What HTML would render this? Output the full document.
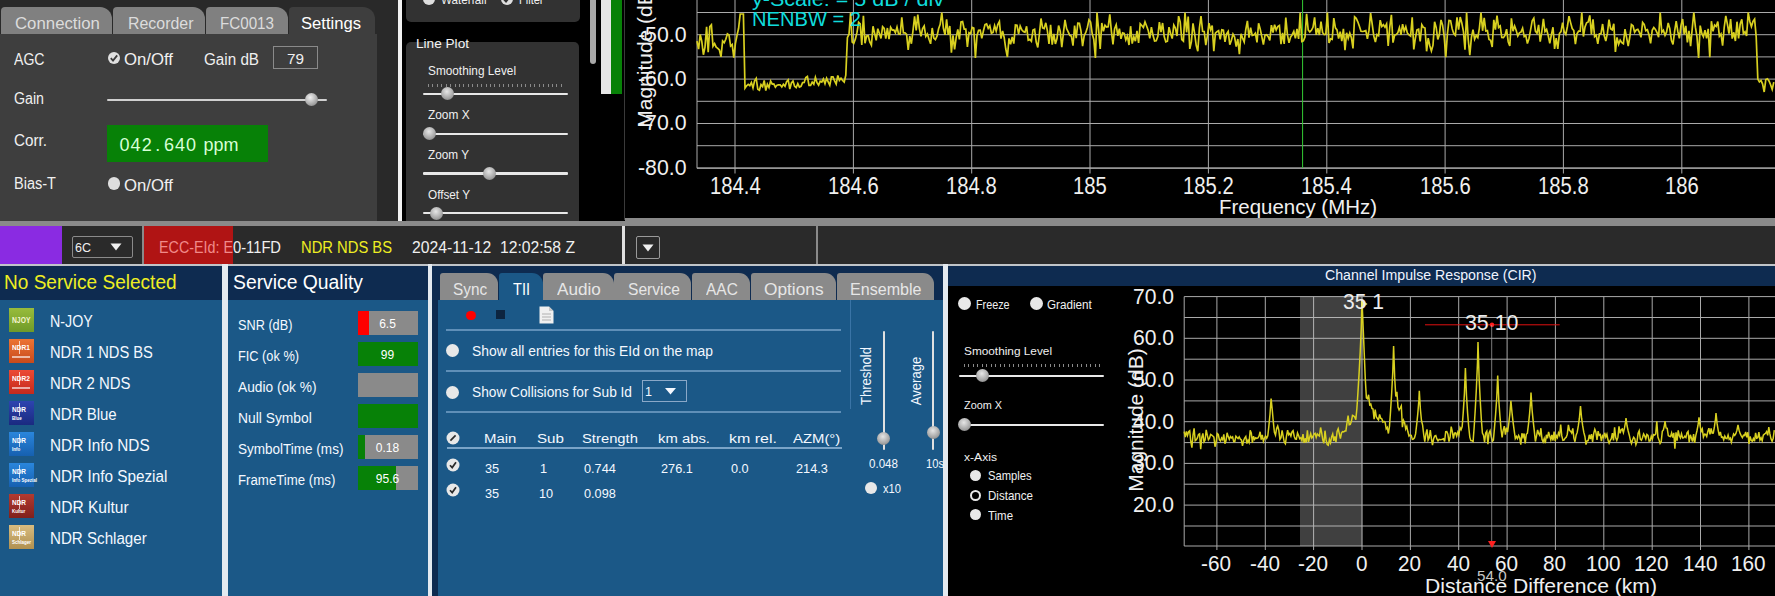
<!DOCTYPE html>
<html><head><meta charset="utf-8"><style>
html,body{margin:0;padding:0;}
body{width:1775px;height:596px;overflow:hidden;position:relative;background:#000;font-family:"Liberation Sans",sans-serif;}
body>div,body>span,body>svg{position:absolute;}
span{white-space:nowrap;}
</style></head><body>
<div style="left:0px;top:0px;width:397.5px;height:221px;background:#292929;"></div>
<div style="left:0px;top:34px;width:376.5px;height:187px;background:#3e3e3e;"></div>
<div style="left:1px;top:7px;width:111px;height:27px;background:#808080;border-radius:4px 12px 0 0;"></div>
<span style="left:14.80px;top:15.86px;font-size:16.7px;line-height:16.7px;color:#dcdcdc;transform:scaleX(1.0061);transform-origin:0 0;">Connection</span>
<div style="left:113px;top:7px;width:92px;height:27px;background:#808080;border-radius:4px 12px 0 0;"></div>
<span style="left:127.50px;top:15.86px;font-size:16.7px;line-height:16.7px;color:#dcdcdc;transform:scaleX(0.9537);transform-origin:0 0;">Recorder</span>
<div style="left:206px;top:7px;width:82px;height:27px;background:#808080;border-radius:4px 12px 0 0;"></div>
<span style="left:220.00px;top:15.86px;font-size:16.7px;line-height:16.7px;color:#dcdcdc;transform:scaleX(0.9089);transform-origin:0 0;">FC0013</span>
<div style="left:289px;top:7px;width:86px;height:27px;background:#3e3e3e;border-radius:4px 12px 0 0;"></div>
<span style="left:301.00px;top:15.86px;font-size:16.7px;line-height:16.7px;color:#ffffff;transform:scaleX(0.9944);transform-origin:0 0;">Settings</span>
<span style="left:14.00px;top:52.46px;font-size:16px;line-height:16px;color:#f0f0f0;transform:scaleX(0.8797);transform-origin:0 0;">AGC</span>
<span style="left:14.00px;top:91.26px;font-size:16px;line-height:16px;color:#f0f0f0;transform:scaleX(0.8877);transform-origin:0 0;">Gain</span>
<span style="left:14.00px;top:133.46px;font-size:16px;line-height:16px;color:#f0f0f0;transform:scaleX(0.9518);transform-origin:0 0;">Corr.</span>
<span style="left:14.00px;top:176.46px;font-size:16px;line-height:16px;color:#f0f0f0;transform:scaleX(0.9086);transform-origin:0 0;">Bias-T</span>
<svg style="left:107px;top:51px" width="14" height="14" viewBox="0 0 14 14"><circle cx="7" cy="7" r="6" fill="#e0e0e0"/><path d="M3.8 7.2 L6 9.6 L10.2 4.4" stroke="#3c3c3c" stroke-width="1.8" fill="none"/></svg>
<span style="left:124.40px;top:51.96px;font-size:16px;line-height:16px;color:#f0f0f0;transform:scaleX(1.0462);transform-origin:0 0;">On/Off</span>
<span style="left:203.70px;top:51.96px;font-size:16px;line-height:16px;color:#f0f0f0;transform:scaleX(0.9514);transform-origin:0 0;">Gain dB</span>
<div style="left:273px;top:46px;width:45px;height:23px;background:transparent;border:1px solid #8a8a8a;box-sizing:border-box;"></div>
<span style="left:287.00px;top:51.30px;font-size:15px;line-height:15px;color:#f0f0f0;transform:scaleX(1.0189);transform-origin:0 0;">79</span>
<div style="left:107px;top:98.5px;width:220px;height:2.5px;background:#d0d0d0;border-radius:1px;"></div>
<div style="left:305px;top:93px;width:13px;height:13px;border-radius:50%;background:radial-gradient(circle at 40% 35%,#f0f0f0,#9a9a9a 70%,#707070);"></div>
<div style="left:107px;top:125px;width:161px;height:37px;background:#078107;"></div>
<span style="left:119.49px;top:136.26px;font-size:18px;line-height:18px;color:#d8ffd8;">0</span>
<span style="left:130.59px;top:136.26px;font-size:18px;line-height:18px;color:#d8ffd8;">4</span>
<span style="left:141.69px;top:136.26px;font-size:18px;line-height:18px;color:#d8ffd8;">2</span>
<span style="left:155.30px;top:136.26px;font-size:18px;line-height:18px;color:#d8ffd8;">.</span>
<span style="left:163.89px;top:136.26px;font-size:18px;line-height:18px;color:#d8ffd8;">6</span>
<span style="left:174.99px;top:136.26px;font-size:18px;line-height:18px;color:#d8ffd8;">4</span>
<span style="left:186.09px;top:136.26px;font-size:18px;line-height:18px;color:#d8ffd8;">0</span>
<span style="left:203.60px;top:136.26px;font-size:18px;line-height:18px;color:#d8ffd8;">ppm</span>
<div style="left:107.5px;top:177px;width:12.5px;height:12.5px;border-radius:50%;background:#dedede;"></div>
<span style="left:124.40px;top:177.66px;font-size:16px;line-height:16px;color:#f0f0f0;transform:scaleX(1.0462);transform-origin:0 0;">On/Off</span>
<div style="left:397.5px;top:0px;width:4px;height:221px;background:#f2f2f2;"></div>
<div style="left:401.5px;top:0px;width:223.5px;height:221px;background:#000;"></div>
<div style="left:406px;top:-10px;width:173.5px;height:32.3px;background:#323232;border-radius:5px;"></div>
<div style="left:422.8px;top:-7.5px;width:12px;height:12px;border-radius:50%;background:#dedede;"></div>
<span style="left:440.50px;top:-6.80px;font-size:13px;line-height:13px;color:#f0f0f0;transform:scaleX(0.8956);transform-origin:0 0;">Waterfall</span>
<svg style="left:500.4px;top:-8.5px" width="14" height="14" viewBox="0 0 14 14"><circle cx="7" cy="7" r="6" fill="#dedede"/><path d="M3.8 7.2 L6 9.6 L10.2 4.4" stroke="#323232" stroke-width="1.8" fill="none"/></svg>
<span style="left:518.50px;top:-6.80px;font-size:13px;line-height:13px;color:#f0f0f0;transform:scaleX(0.8481);transform-origin:0 0;">Filter</span>
<div style="left:406px;top:42px;width:173px;height:190px;background:#323232;border-radius:5px;"></div>
<span style="left:415.70px;top:37.30px;font-size:13px;line-height:13px;color:#f4f4f4;transform:scaleX(1.0477);transform-origin:0 0;">Line Plot</span>
<span style="left:427.50px;top:64.62px;font-size:12.5px;line-height:12.5px;color:#f0f0f0;transform:scaleX(0.9451);transform-origin:0 0;">Smoothing Level</span>
<div style="left:428.00px;top:84px;width:1px;height:3px;background:#8a8a8a;"></div><div style="left:432.43px;top:84px;width:1px;height:3px;background:#8a8a8a;"></div><div style="left:436.86px;top:84px;width:1px;height:3px;background:#8a8a8a;"></div><div style="left:441.29px;top:84px;width:1px;height:3px;background:#8a8a8a;"></div><div style="left:445.72px;top:84px;width:1px;height:3px;background:#8a8a8a;"></div><div style="left:450.15px;top:84px;width:1px;height:3px;background:#8a8a8a;"></div><div style="left:454.58px;top:84px;width:1px;height:3px;background:#8a8a8a;"></div><div style="left:459.01px;top:84px;width:1px;height:3px;background:#8a8a8a;"></div><div style="left:463.44px;top:84px;width:1px;height:3px;background:#8a8a8a;"></div><div style="left:467.87px;top:84px;width:1px;height:3px;background:#8a8a8a;"></div><div style="left:472.30px;top:84px;width:1px;height:3px;background:#8a8a8a;"></div><div style="left:476.73px;top:84px;width:1px;height:3px;background:#8a8a8a;"></div><div style="left:481.16px;top:84px;width:1px;height:3px;background:#8a8a8a;"></div><div style="left:485.59px;top:84px;width:1px;height:3px;background:#8a8a8a;"></div><div style="left:490.02px;top:84px;width:1px;height:3px;background:#8a8a8a;"></div><div style="left:494.45px;top:84px;width:1px;height:3px;background:#8a8a8a;"></div><div style="left:498.88px;top:84px;width:1px;height:3px;background:#8a8a8a;"></div><div style="left:503.31px;top:84px;width:1px;height:3px;background:#8a8a8a;"></div><div style="left:507.74px;top:84px;width:1px;height:3px;background:#8a8a8a;"></div><div style="left:512.17px;top:84px;width:1px;height:3px;background:#8a8a8a;"></div><div style="left:516.60px;top:84px;width:1px;height:3px;background:#8a8a8a;"></div><div style="left:521.03px;top:84px;width:1px;height:3px;background:#8a8a8a;"></div><div style="left:525.46px;top:84px;width:1px;height:3px;background:#8a8a8a;"></div><div style="left:529.89px;top:84px;width:1px;height:3px;background:#8a8a8a;"></div><div style="left:534.32px;top:84px;width:1px;height:3px;background:#8a8a8a;"></div><div style="left:538.75px;top:84px;width:1px;height:3px;background:#8a8a8a;"></div><div style="left:543.18px;top:84px;width:1px;height:3px;background:#8a8a8a;"></div><div style="left:547.61px;top:84px;width:1px;height:3px;background:#8a8a8a;"></div><div style="left:552.04px;top:84px;width:1px;height:3px;background:#8a8a8a;"></div><div style="left:556.47px;top:84px;width:1px;height:3px;background:#8a8a8a;"></div><div style="left:560.90px;top:84px;width:1px;height:3px;background:#8a8a8a;"></div>
<div style="left:422.5px;top:92.8px;width:145px;height:2.2px;background:#e8e8e8;border-radius:1px;"></div>
<div style="left:440.5px;top:87px;width:13px;height:13px;border-radius:50%;background:radial-gradient(circle at 45% 35%,#e6e6e6,#a0a0a0 65%,#6a6a6a);"></div>
<span style="left:427.50px;top:109.42px;font-size:12.5px;line-height:12.5px;color:#f0f0f0;transform:scaleX(0.9506);transform-origin:0 0;">Zoom X</span>
<div style="left:422.5px;top:132.5px;width:145px;height:2.2px;background:#e8e8e8;border-radius:1px;"></div>
<div style="left:422.5px;top:127.1px;width:13px;height:13px;border-radius:50%;background:radial-gradient(circle at 45% 35%,#e6e6e6,#a0a0a0 65%,#6a6a6a);"></div>
<span style="left:427.50px;top:149.42px;font-size:12.5px;line-height:12.5px;color:#f0f0f0;transform:scaleX(0.9418);transform-origin:0 0;">Zoom Y</span>
<div style="left:422.5px;top:172.4px;width:145px;height:2.2px;background:#e8e8e8;border-radius:1px;"></div>
<div style="left:482.5px;top:167.0px;width:13px;height:13px;border-radius:50%;background:radial-gradient(circle at 45% 35%,#e6e6e6,#a0a0a0 65%,#6a6a6a);"></div>
<span style="left:427.50px;top:189.42px;font-size:12.5px;line-height:12.5px;color:#f0f0f0;transform:scaleX(0.9395);transform-origin:0 0;">Offset Y</span>
<div style="left:422.5px;top:212.3px;width:145px;height:2.2px;background:#e8e8e8;border-radius:1px;"></div>
<div style="left:429.5px;top:206.9px;width:13px;height:13px;border-radius:50%;background:radial-gradient(circle at 45% 35%,#e6e6e6,#a0a0a0 65%,#6a6a6a);"></div>
<div style="left:590px;top:-5px;width:6px;height:68.5px;background:#a8a8a8;border-radius:3px;"></div>
<div style="left:601px;top:0px;width:10px;height:94px;background:#e6e6e6;"></div>
<div style="left:611px;top:0px;width:11px;height:94px;background:#078107;"></div>
<div style="left:623.5px;top:0px;width:1.5px;height:220px;background:#3a3a3a;"></div>
<svg style="left:0;top:0" width="1775" height="220"><g stroke="#c8c8c8" stroke-width="1" opacity="0.85"><line x1="697" y1="12.5" x2="1775" y2="12.5"/><line x1="697" y1="34.7" x2="1775" y2="34.7"/><line x1="697" y1="56.9" x2="1775" y2="56.9"/><line x1="697" y1="79.1" x2="1775" y2="79.1"/><line x1="697" y1="101.3" x2="1775" y2="101.3"/><line x1="697" y1="123.5" x2="1775" y2="123.5"/><line x1="697" y1="145.7" x2="1775" y2="145.7"/><line x1="697" y1="167.9" x2="1775" y2="167.9"/><line x1="735.0" y1="0" x2="735.0" y2="173.5"/><line x1="853.4" y1="0" x2="853.4" y2="173.5"/><line x1="971.7" y1="0" x2="971.7" y2="173.5"/><line x1="1090.0" y1="0" x2="1090.0" y2="173.5"/><line x1="1208.4" y1="0" x2="1208.4" y2="173.5"/><line x1="1326.8" y1="0" x2="1326.8" y2="173.5"/><line x1="1445.1" y1="0" x2="1445.1" y2="173.5"/><line x1="1563.4" y1="0" x2="1563.4" y2="173.5"/><line x1="1681.8" y1="0" x2="1681.8" y2="173.5"/><line x1="1800.1" y1="0" x2="1800.1" y2="173.5"/><line x1="697" y1="0" x2="697" y2="168.3"/><line x1="697" y1="168.3" x2="1775" y2="168.3"/></g><line x1="1302.6" y1="0" x2="1302.6" y2="168" stroke="#33cc33" stroke-width="1"/><polyline points="697.0,41.1 698.6,49.2 700.2,34.5 701.8,41.3 703.4,54.7 705.0,47.1 706.6,26.7 708.2,52.1 709.8,26.7 711.4,24.9 713.0,46.2 714.6,43.6 716.2,47.2 717.8,48.3 719.4,50.0 721.0,56.8 722.6,41.0 724.2,42.7 725.8,39.3 727.4,33.8 729.0,35.0 730.6,46.1 732.2,44.6 733.8,57.7 735.4,43.6 737.0,35.4 738.6,28.3 740.2,14.0 741.8,14.0 743.4,14.0 745.0,88.1 746.6,85.8 748.2,84.4 749.8,85.7 751.4,82.6 753.0,87.9 754.6,80.9 756.2,78.4 757.8,89.3 759.4,90.2 761.0,84.6 762.6,86.6 764.2,80.5 765.8,90.5 767.4,84.2 769.0,87.5 770.6,81.1 772.2,84.0 773.8,83.8 775.4,87.1 777.0,85.2 778.6,84.9 780.2,84.8 781.8,86.9 783.4,84.3 785.0,86.3 786.6,81.7 788.2,79.9 789.8,89.0 791.4,83.0 793.0,81.1 794.6,86.2 796.2,87.6 797.8,83.6 799.4,87.1 801.0,86.3 802.6,82.6 804.2,82.4 805.8,77.6 807.4,76.5 809.0,85.4 810.6,85.4 812.2,82.1 813.8,84.2 815.4,77.4 817.0,82.7 818.6,85.1 820.2,81.2 821.8,82.0 823.4,78.9 825.0,83.7 826.6,78.3 828.2,81.9 829.8,85.3 831.4,76.9 833.0,76.9 834.6,80.9 836.2,84.1 837.8,75.4 839.4,80.4 841.0,78.2 842.6,80.5 844.2,82.0 845.8,75.1 847.4,37.6 849.0,34.2 850.6,12.5 852.2,42.0 853.8,43.3 855.4,38.9 857.0,32.4 858.6,22.3 860.2,23.9 861.8,44.9 863.4,15.8 865.0,43.2 866.6,36.0 868.2,35.7 869.8,41.9 871.4,45.2 873.0,26.3 874.6,33.2 876.2,40.4 877.8,28.7 879.4,33.4 881.0,38.4 882.6,26.6 884.2,28.3 885.8,38.6 887.4,28.0 889.0,39.2 890.6,27.3 892.2,30.0 893.8,29.8 895.4,32.7 897.0,27.2 898.6,34.0 900.2,34.2 901.8,17.4 903.4,32.9 905.0,32.9 906.6,34.4 908.2,50.0 909.8,36.1 911.4,43.7 913.0,30.6 914.6,16.4 916.2,30.4 917.8,14.6 919.4,28.6 921.0,36.3 922.6,28.6 924.2,26.0 925.8,36.4 927.4,33.9 929.0,39.2 930.6,43.8 932.2,28.0 933.8,38.0 935.4,39.6 937.0,36.2 938.6,28.8 940.2,24.4 941.8,12.5 943.4,28.3 945.0,34.8 946.6,19.3 948.2,34.8 949.8,26.0 951.4,52.6 953.0,35.4 954.6,49.5 956.2,37.4 957.8,29.3 959.4,39.4 961.0,22.0 962.6,21.5 964.2,29.1 965.8,29.1 967.4,46.9 969.0,32.6 970.6,33.6 972.2,27.4 973.8,28.0 975.4,58.0 977.0,35.4 978.6,30.3 980.2,30.2 981.8,38.4 983.4,31.0 985.0,24.7 986.6,24.0 988.2,28.4 989.8,25.8 991.4,33.3 993.0,32.4 994.6,25.6 996.2,31.1 997.8,24.6 999.4,21.5 1001.0,38.7 1002.6,31.0 1004.2,37.6 1005.8,49.0 1007.4,57.0 1009.0,38.4 1010.6,44.2 1012.2,36.9 1013.8,43.6 1015.4,25.0 1017.0,25.3 1018.6,33.9 1020.2,26.0 1021.8,29.8 1023.4,31.6 1025.0,32.3 1026.6,26.3 1028.2,40.2 1029.8,39.4 1031.4,41.3 1033.0,30.0 1034.6,29.3 1036.2,42.0 1037.8,47.5 1039.4,34.0 1041.0,18.5 1042.6,27.8 1044.2,28.5 1045.8,22.8 1047.4,30.8 1049.0,44.0 1050.6,24.9 1052.2,44.6 1053.8,33.9 1055.4,43.9 1057.0,38.6 1058.6,25.6 1060.2,31.2 1061.8,47.2 1063.4,33.1 1065.0,19.8 1066.6,28.6 1068.2,31.8 1069.8,35.4 1071.4,36.1 1073.0,45.7 1074.6,25.5 1076.2,38.2 1077.8,23.2 1079.4,23.3 1081.0,31.2 1082.6,46.1 1084.2,35.7 1085.8,32.4 1087.4,27.5 1089.0,19.8 1090.6,22.0 1092.2,33.6 1093.8,39.5 1095.4,58.0 1097.0,12.5 1098.6,29.5 1100.2,49.0 1101.8,23.0 1103.4,31.4 1105.0,25.3 1106.6,27.0 1108.2,26.7 1109.8,14.3 1111.4,31.3 1113.0,44.3 1114.6,28.6 1116.2,24.7 1117.8,35.8 1119.4,28.7 1121.0,38.8 1122.6,32.8 1124.2,33.3 1125.8,39.9 1127.4,35.8 1129.0,45.0 1130.6,26.2 1132.2,43.6 1133.8,36.6 1135.4,41.2 1137.0,30.8 1138.6,43.0 1140.2,23.7 1141.8,25.5 1143.4,27.5 1145.0,21.9 1146.6,26.0 1148.2,30.4 1149.8,38.4 1151.4,27.1 1153.0,35.3 1154.6,41.1 1156.2,40.8 1157.8,36.5 1159.4,22.2 1161.0,32.0 1162.6,23.0 1164.2,36.5 1165.8,41.9 1167.4,41.2 1169.0,27.1 1170.6,33.4 1172.2,38.6 1173.8,25.1 1175.4,28.0 1177.0,36.0 1178.6,16.1 1180.2,22.0 1181.8,39.7 1183.4,41.2 1185.0,12.5 1186.6,32.3 1188.2,16.6 1189.8,48.9 1191.4,41.6 1193.0,23.3 1194.6,33.4 1196.2,45.3 1197.8,51.3 1199.4,28.0 1201.0,16.0 1202.6,31.3 1204.2,31.5 1205.8,45.1 1207.4,35.8 1209.0,23.2 1210.6,29.9 1212.2,25.5 1213.8,51.2 1215.4,33.1 1217.0,31.7 1218.6,30.6 1220.2,39.3 1221.8,29.8 1223.4,30.1 1225.0,41.9 1226.6,33.9 1228.2,31.5 1229.8,44.6 1231.4,40.2 1233.0,34.1 1234.6,37.0 1236.2,46.7 1237.8,39.0 1239.4,54.1 1241.0,33.8 1242.6,38.1 1244.2,41.9 1245.8,29.5 1247.4,20.9 1249.0,37.7 1250.6,27.6 1252.2,35.5 1253.8,35.0 1255.4,33.1 1257.0,42.4 1258.6,23.2 1260.2,28.9 1261.8,36.7 1263.4,44.6 1265.0,35.1 1266.6,34.7 1268.2,36.7 1269.8,40.5 1271.4,25.2 1273.0,32.5 1274.6,24.7 1276.2,30.1 1277.8,26.5 1279.4,25.5 1281.0,44.2 1282.6,32.8 1284.2,44.0 1285.8,17.6 1287.4,34.7 1289.0,42.9 1290.6,37.0 1292.2,34.7 1293.8,31.4 1295.4,38.4 1297.0,29.0 1298.6,38.9 1300.2,12.9 1301.8,41.6 1303.4,40.9 1305.0,37.1 1306.6,13.9 1308.2,30.0 1309.8,31.9 1311.4,30.3 1313.0,27.3 1314.6,17.3 1316.2,34.9 1317.8,28.2 1319.4,35.0 1321.0,21.5 1322.6,32.7 1324.2,34.6 1325.8,34.2 1327.4,12.5 1329.0,43.0 1330.6,38.9 1332.2,39.4 1333.8,18.1 1335.4,27.8 1337.0,29.9 1338.6,38.6 1340.2,31.7 1341.8,41.2 1343.4,28.8 1345.0,50.1 1346.6,32.8 1348.2,38.5 1349.8,33.0 1351.4,37.7 1353.0,48.4 1354.6,16.8 1356.2,18.3 1357.8,21.8 1359.4,26.2 1361.0,31.3 1362.6,31.5 1364.2,31.1 1365.8,30.6 1367.4,38.8 1369.0,30.2 1370.6,13.1 1372.2,24.1 1373.8,36.1 1375.4,42.0 1377.0,34.5 1378.6,35.7 1380.2,20.1 1381.8,26.5 1383.4,24.7 1385.0,27.2 1386.6,24.0 1388.2,46.0 1389.8,26.8 1391.4,14.9 1393.0,42.6 1394.6,35.3 1396.2,34.6 1397.8,32.8 1399.4,27.6 1401.0,34.8 1402.6,24.1 1404.2,31.2 1405.8,26.7 1407.4,33.2 1409.0,34.9 1410.6,36.2 1412.2,17.3 1413.8,49.4 1415.4,38.0 1417.0,29.9 1418.6,29.2 1420.2,41.3 1421.8,24.7 1423.4,27.4 1425.0,28.0 1426.6,51.3 1428.2,38.2 1429.8,45.7 1431.4,51.0 1433.0,45.2 1434.6,21.7 1436.2,27.7 1437.8,39.4 1439.4,34.5 1441.0,19.9 1442.6,25.1 1444.2,36.9 1445.8,57.3 1447.4,33.8 1449.0,20.5 1450.6,20.7 1452.2,28.9 1453.8,33.7 1455.4,35.4 1457.0,17.4 1458.6,29.7 1460.2,17.1 1461.8,22.9 1463.4,31.3 1465.0,49.7 1466.6,12.5 1468.2,39.3 1469.8,55.1 1471.4,37.6 1473.0,29.7 1474.6,39.2 1476.2,35.5 1477.8,37.6 1479.4,28.1 1481.0,12.6 1482.6,30.8 1484.2,17.8 1485.8,31.0 1487.4,30.6 1489.0,39.4 1490.6,40.4 1492.2,47.0 1493.8,19.8 1495.4,29.6 1497.0,15.5 1498.6,27.4 1500.2,25.9 1501.8,37.5 1503.4,37.7 1505.0,35.3 1506.6,29.2 1508.2,41.7 1509.8,46.0 1511.4,18.4 1513.0,31.2 1514.6,25.9 1516.2,30.5 1517.8,35.9 1519.4,32.8 1521.0,32.1 1522.6,28.2 1524.2,36.6 1525.8,35.6 1527.4,43.6 1529.0,38.5 1530.6,29.8 1532.2,20.7 1533.8,18.2 1535.4,31.2 1537.0,33.3 1538.6,24.8 1540.2,41.6 1541.8,31.8 1543.4,18.9 1545.0,31.6 1546.6,29.5 1548.2,35.5 1549.8,43.3 1551.4,34.6 1553.0,27.2 1554.6,48.9 1556.2,38.2 1557.8,48.8 1559.4,33.5 1561.0,31.6 1562.6,22.6 1564.2,31.8 1565.8,34.4 1567.4,26.5 1569.0,16.2 1570.6,22.6 1572.2,28.5 1573.8,30.6 1575.4,44.1 1577.0,33.7 1578.6,31.1 1580.2,31.2 1581.8,12.5 1583.4,36.5 1585.0,27.0 1586.6,22.8 1588.2,21.9 1589.8,15.4 1591.4,34.3 1593.0,19.4 1594.6,36.6 1596.2,35.1 1597.8,43.8 1599.4,33.8 1601.0,33.7 1602.6,24.0 1604.2,35.5 1605.8,41.0 1607.4,33.3 1609.0,19.7 1610.6,28.7 1612.2,29.8 1613.8,23.7 1615.4,52.0 1617.0,37.4 1618.6,44.4 1620.2,40.1 1621.8,42.6 1623.4,43.7 1625.0,29.1 1626.6,37.6 1628.2,46.1 1629.8,37.0 1631.4,24.5 1633.0,25.8 1634.6,32.2 1636.2,29.9 1637.8,29.3 1639.4,32.4 1641.0,37.3 1642.6,22.4 1644.2,24.5 1645.8,30.6 1647.4,29.7 1649.0,35.0 1650.6,43.4 1652.2,30.2 1653.8,27.5 1655.4,29.4 1657.0,32.5 1658.6,37.1 1660.2,12.5 1661.8,32.3 1663.4,30.2 1665.0,35.3 1666.6,31.9 1668.2,23.0 1669.8,28.6 1671.4,40.4 1673.0,44.4 1674.6,31.3 1676.2,21.1 1677.8,31.4 1679.4,38.3 1681.0,25.4 1682.6,19.0 1684.2,34.3 1685.8,25.9 1687.4,42.3 1689.0,30.9 1690.6,46.2 1692.2,28.8 1693.8,12.5 1695.4,27.2 1697.0,36.9 1698.6,58.0 1700.2,25.6 1701.8,33.3 1703.4,36.7 1705.0,30.2 1706.6,38.4 1708.2,28.9 1709.8,57.3 1711.4,21.2 1713.0,31.4 1714.6,25.0 1716.2,26.4 1717.8,21.6 1719.4,36.2 1721.0,34.0 1722.6,45.7 1724.2,27.5 1725.8,15.9 1727.4,24.1 1729.0,33.7 1730.6,19.0 1732.2,38.6 1733.8,32.3 1735.4,41.0 1737.0,21.7 1738.6,38.4 1740.2,23.9 1741.8,19.4 1743.4,33.7 1745.0,31.7 1746.6,36.0 1748.2,12.5 1749.8,21.5 1751.4,26.7 1753.0,21.4 1754.6,19.1 1756.2,36.9 1757.8,79.1 1759.4,82.0 1761.0,80.5 1762.6,84.1 1764.2,92.0 1765.8,79.5 1767.4,78.8 1769.0,80.9 1770.6,84.7 1772.2,89.4 1773.8,82.1" fill="none" stroke="#d8d020" stroke-width="1.7"/></svg>
<span style="left:638.00px;top:23.65px;font-size:22.5px;line-height:22.5px;color:#f0f0f0;transform:scaleX(0.9457);transform-origin:0 0;">-50.0</span>
<span style="left:638.00px;top:68.05px;font-size:22.5px;line-height:22.5px;color:#f0f0f0;transform:scaleX(0.9457);transform-origin:0 0;">-60.0</span>
<span style="left:638.00px;top:112.45px;font-size:22.5px;line-height:22.5px;color:#f0f0f0;transform:scaleX(0.9457);transform-origin:0 0;">-70.0</span>
<span style="left:638.00px;top:156.85px;font-size:22.5px;line-height:22.5px;color:#f0f0f0;transform:scaleX(0.9457);transform-origin:0 0;">-80.0</span>
<span style="left:709.67px;top:174.73px;font-size:23px;line-height:23px;color:#f0f0f0;transform:scaleX(0.8800);transform-origin:0 0;">184.4</span>
<span style="left:828.02px;top:174.73px;font-size:23px;line-height:23px;color:#f0f0f0;transform:scaleX(0.8800);transform-origin:0 0;">184.6</span>
<span style="left:946.37px;top:174.73px;font-size:23px;line-height:23px;color:#f0f0f0;transform:scaleX(0.8800);transform-origin:0 0;">184.8</span>
<span style="left:1073.16px;top:174.73px;font-size:23px;line-height:23px;color:#f0f0f0;transform:scaleX(0.8800);transform-origin:0 0;">185</span>
<span style="left:1183.07px;top:174.73px;font-size:23px;line-height:23px;color:#f0f0f0;transform:scaleX(0.8800);transform-origin:0 0;">185.2</span>
<span style="left:1301.42px;top:174.73px;font-size:23px;line-height:23px;color:#f0f0f0;transform:scaleX(0.8800);transform-origin:0 0;">185.4</span>
<span style="left:1419.77px;top:174.73px;font-size:23px;line-height:23px;color:#f0f0f0;transform:scaleX(0.8800);transform-origin:0 0;">185.6</span>
<span style="left:1538.12px;top:174.73px;font-size:23px;line-height:23px;color:#f0f0f0;transform:scaleX(0.8800);transform-origin:0 0;">185.8</span>
<span style="left:1664.91px;top:174.73px;font-size:23px;line-height:23px;color:#f0f0f0;transform:scaleX(0.8800);transform-origin:0 0;">186</span>
<span style="left:1219.00px;top:196.22px;font-size:21px;line-height:21px;color:#f0f0f0;transform:scaleX(0.9741);transform-origin:0 0;">Frequency (MHz)</span>
<span style="left:644px;top:56px;font-size:21px;line-height:21px;color:#f0f0f0;transform:translate(-50%,-50%) rotate(-90deg);white-space:nowrap;">Magnitude (dB)</span>
<span style="left:751.80px;top:-10.53px;font-size:20px;line-height:20px;color:#10dcdc;transform:scaleX(1.0761);transform-origin:0 0;">y-Scale: = 5 dB / div</span>
<span style="left:751.80px;top:9.47px;font-size:20px;line-height:20px;color:#10dcdc;transform:scaleX(1.0059);transform-origin:0 0;">NENBW = 2</span>
<div style="left:0px;top:221px;width:625px;height:5px;background:#8a8a8a;"></div>
<div style="left:625px;top:218px;width:1150px;height:8px;background:#8a8a8a;"></div>
<div style="left:0px;top:226px;width:1775px;height:38px;background:#2a2a2a;"></div>
<div style="left:0px;top:226px;width:62px;height:38px;background:#8a2be2;"></div>
<div style="left:72px;top:236px;width:61px;height:22px;background:transparent;border:1px solid #8a8a8a;border-radius:2px;box-sizing:border-box;"></div>
<span style="left:75.00px;top:241.00px;font-size:13px;line-height:13px;color:#f0f0f0;transform:scaleX(0.9629);transform-origin:0 0;">6C</span>
<svg style="left:110px;top:243px" width="12" height="8"><path d="M0.5 0.5 L11.5 0.5 L6 7.5Z" fill="#f0f0f0"/></svg>
<div style="left:142px;top:226px;width:2px;height:38px;background:#8a8a8a;"></div>
<div style="left:144px;top:226px;width:89px;height:38px;background:#b01414;"></div>
<span style="left:159.00px;top:239.96px;font-size:16px;line-height:16px;color:#f08a8a;transform:scaleX(0.8949);transform-origin:0 0;">ECC-EId: E</span>
<span style="left:233.00px;top:239.96px;font-size:16px;line-height:16px;color:#f0f0f0;transform:scaleX(0.9202);transform-origin:0 0;">0-11FD</span>
<span style="left:301.00px;top:239.96px;font-size:16px;line-height:16px;color:#eeee22;transform:scaleX(0.9222);transform-origin:0 0;">NDR NDS BS</span>
<span style="left:412.00px;top:239.96px;font-size:16px;line-height:16px;color:#f0f0f0;transform:scaleX(0.9817);transform-origin:0 0;white-space:pre;">2024-11-12  12:02:58 Z</span>
<div style="left:622px;top:226px;width:3px;height:38px;background:#e0e0e0;"></div>
<div style="left:636px;top:236px;width:24px;height:23px;background:transparent;border:1px solid #9a9a9a;border-radius:2px;box-sizing:border-box;"></div>
<svg style="left:642px;top:244px" width="12" height="8"><path d="M0.5 0.5 L11.5 0.5 L6 7.5Z" fill="#f0f0f0"/></svg>
<div style="left:816px;top:226px;width:2px;height:38px;background:#8a8a8a;"></div>
<div style="left:0px;top:264px;width:1775px;height:2px;background:#c0c4c8;"></div>
<div style="left:0px;top:266px;width:222px;height:34px;background:#0e2b50;"></div>
<div style="left:0px;top:300px;width:222px;height:296px;background:#1b5887;"></div>
<div style="left:222px;top:264px;width:6px;height:332px;background:#e4eaf0;"></div>
<div style="left:228px;top:266px;width:200px;height:34px;background:#0e2b50;"></div>
<div style="left:228px;top:300px;width:200px;height:296px;background:#1b5887;"></div>
<div style="left:428px;top:264px;width:4px;height:332px;background:#e4eaf0;"></div>
<div style="left:432px;top:266px;width:511px;height:330px;background:#0e2b50;"></div>
<div style="left:437.5px;top:300px;width:505.5px;height:296px;background:#1b5887;"></div>
<div style="left:943px;top:264px;width:5px;height:332px;background:#e4eaf0;"></div>
<div style="left:948px;top:266px;width:827px;height:20px;background:#0e2b50;"></div>
<div style="left:948px;top:286px;width:827px;height:310px;background:#000;"></div>
<span style="left:3.60px;top:272.27px;font-size:20px;line-height:20px;color:#eeee22;transform:scaleX(0.9525);transform-origin:0 0;">No Service Selected</span>
<span style="left:233.00px;top:272.27px;font-size:20px;line-height:20px;color:#ffffff;transform:scaleX(0.9666);transform-origin:0 0;">Service Quality</span>
<div style="left:9.2px;top:307.5px;width:24.4px;height:24.4px;background:linear-gradient(#98bc3c,#6f9a28);"></div>
<span style="left:12.40px;top:315.80px;font-size:8.5px;line-height:8.5px;color:#f4f4d0;transform:scaleX(0.7940);transform-origin:0 0;font-weight:bold;">NJOY</span>
<span style="left:50.30px;top:314.26px;font-size:16px;line-height:16px;color:#f4f8ff;transform:scaleX(0.8917);transform-origin:0 0;">N-JOY</span>
<div style="left:9.2px;top:338.5px;width:24.4px;height:24.4px;background:linear-gradient(#ec7434,#c84a1c);"></div>
<span style="left:12.00px;top:344.23px;font-size:8px;line-height:8px;color:#ffffff;transform:scaleX(0.8263);transform-origin:0 0;font-weight:bold;">NDR1</span>
<div style="left:18.5px;top:340.5px;width:0.8px;height:13px;background:rgba(255,255,255,0.7);"></div>
<div style="left:12px;top:355.5px;width:18px;height:2px;background:rgba(255,255,255,0.6);"></div>
<span style="left:50.30px;top:345.26px;font-size:16px;line-height:16px;color:#f4f8ff;transform:scaleX(0.9186);transform-origin:0 0;">NDR 1 NDS BS</span>
<div style="left:9.2px;top:369.5px;width:24.4px;height:24.4px;background:linear-gradient(#ec4a34,#c42a1c);"></div>
<span style="left:12.00px;top:375.23px;font-size:8px;line-height:8px;color:#ffffff;transform:scaleX(0.8263);transform-origin:0 0;font-weight:bold;">NDR2</span>
<div style="left:18.5px;top:371.5px;width:0.8px;height:13px;background:rgba(255,255,255,0.7);"></div>
<div style="left:12px;top:386.5px;width:18px;height:2px;background:rgba(255,255,255,0.6);"></div>
<span style="left:50.30px;top:376.26px;font-size:16px;line-height:16px;color:#f4f8ff;transform:scaleX(0.9335);transform-origin:0 0;">NDR 2 NDS</span>
<div style="left:9.2px;top:400.5px;width:24.4px;height:24.4px;background:linear-gradient(#2d44b0,#1a2a80);"></div>
<span style="left:12.00px;top:406.23px;font-size:8px;line-height:8px;color:#ffffff;transform:scaleX(0.8076);transform-origin:0 0;font-weight:bold;">NDR</span>
<div style="left:18.5px;top:402.5px;width:0.8px;height:13px;background:rgba(255,255,255,0.7);"></div>
<span style="left:12.00px;top:416.69px;font-size:4.5px;line-height:4.5px;color:#ffffff;font-weight:bold;">Blue</span>
<span style="left:50.30px;top:407.26px;font-size:16px;line-height:16px;color:#f4f8ff;transform:scaleX(0.9377);transform-origin:0 0;">NDR Blue</span>
<div style="left:9.2px;top:431.5px;width:24.4px;height:24.4px;background:linear-gradient(#2a86dc,#1660b0);"></div>
<span style="left:12.00px;top:437.23px;font-size:8px;line-height:8px;color:#ffffff;transform:scaleX(0.8076);transform-origin:0 0;font-weight:bold;">NDR</span>
<div style="left:18.5px;top:433.5px;width:0.8px;height:13px;background:rgba(255,255,255,0.7);"></div>
<span style="left:12.00px;top:447.69px;font-size:4.5px;line-height:4.5px;color:#ffffff;font-weight:bold;">Info</span>
<span style="left:50.30px;top:438.26px;font-size:16px;line-height:16px;color:#f4f8ff;transform:scaleX(0.9575);transform-origin:0 0;">NDR Info NDS</span>
<div style="left:9.2px;top:462.5px;width:24.4px;height:24.4px;background:linear-gradient(#2a86dc,#1660b0);"></div>
<span style="left:12.00px;top:468.23px;font-size:8px;line-height:8px;color:#ffffff;transform:scaleX(0.8076);transform-origin:0 0;font-weight:bold;">NDR</span>
<div style="left:18.5px;top:464.5px;width:0.8px;height:13px;background:rgba(255,255,255,0.7);"></div>
<span style="left:12.00px;top:478.69px;font-size:4.5px;line-height:4.5px;color:#ffffff;font-weight:bold;">Info Spezial</span>
<span style="left:50.30px;top:469.26px;font-size:16px;line-height:16px;color:#f4f8ff;transform:scaleX(0.9567);transform-origin:0 0;">NDR Info Spezial</span>
<div style="left:9.2px;top:493.5px;width:24.4px;height:24.4px;background:linear-gradient(#b23a30,#80201c);"></div>
<span style="left:12.00px;top:499.23px;font-size:8px;line-height:8px;color:#ffffff;transform:scaleX(0.8076);transform-origin:0 0;font-weight:bold;">NDR</span>
<div style="left:18.5px;top:495.5px;width:0.8px;height:13px;background:rgba(255,255,255,0.7);"></div>
<span style="left:12.00px;top:509.69px;font-size:4.5px;line-height:4.5px;color:#ffffff;font-weight:bold;">Kultur</span>
<span style="left:50.30px;top:500.26px;font-size:16px;line-height:16px;color:#f4f8ff;transform:scaleX(0.9715);transform-origin:0 0;">NDR Kultur</span>
<div style="left:9.2px;top:524.5px;width:24.4px;height:24.4px;background:linear-gradient(#d8bc80,#b09050);"></div>
<span style="left:12.00px;top:530.23px;font-size:8px;line-height:8px;color:#ffffff;transform:scaleX(0.8076);transform-origin:0 0;font-weight:bold;">NDR</span>
<div style="left:18.5px;top:526.5px;width:0.8px;height:13px;background:rgba(255,255,255,0.7);"></div>
<span style="left:12.00px;top:540.69px;font-size:4.5px;line-height:4.5px;color:#ffffff;font-weight:bold;">Schlager</span>
<span style="left:50.30px;top:531.26px;font-size:16px;line-height:16px;color:#f4f8ff;transform:scaleX(0.9456);transform-origin:0 0;">NDR Schlager</span>
<div style="left:357.5px;top:310.7px;width:60px;height:24.5px;background:#8a8a8a;"></div>
<div style="left:357.5px;top:310.7px;width:11px;height:24.5px;background:#ff0000;"></div>
<span style="left:237.80px;top:317.65px;font-size:14px;line-height:14px;color:#f4f8ff;transform:scaleX(0.9082);transform-origin:0 0;">SNR (dB)</span>
<span style="left:379.16px;top:317.54px;font-size:12px;line-height:12px;color:#ffffff;">6.5</span>
<div style="left:357.5px;top:341.7px;width:60px;height:24.5px;background:#078107;"></div>
<span style="left:237.80px;top:348.65px;font-size:14px;line-height:14px;color:#f4f8ff;transform:scaleX(0.9120);transform-origin:0 0;">FIC (ok %)</span>
<span style="left:380.83px;top:348.54px;font-size:12px;line-height:12px;color:#ffffff;">99</span>
<div style="left:357.5px;top:372.7px;width:60px;height:24.5px;background:#8a8a8a;"></div>
<span style="left:237.80px;top:379.65px;font-size:14px;line-height:14px;color:#f4f8ff;transform:scaleX(0.9795);transform-origin:0 0;">Audio (ok %)</span>
<div style="left:357.5px;top:403.7px;width:60px;height:24.5px;background:#078107;"></div>
<span style="left:237.80px;top:410.65px;font-size:14px;line-height:14px;color:#f4f8ff;transform:scaleX(0.9881);transform-origin:0 0;">Null Symbol</span>
<div style="left:357.5px;top:434.7px;width:60px;height:24.5px;background:#8a8a8a;"></div>
<div style="left:357.5px;top:434.7px;width:7px;height:24.5px;background:#078107;"></div>
<span style="left:237.80px;top:441.65px;font-size:14px;line-height:14px;color:#f4f8ff;transform:scaleX(0.9656);transform-origin:0 0;">SymbolTime (ms)</span>
<span style="left:375.82px;top:441.54px;font-size:12px;line-height:12px;color:#ffffff;">0.18</span>
<div style="left:357.5px;top:465.7px;width:60px;height:24.5px;background:#8a8a8a;"></div>
<div style="left:357.5px;top:465.7px;width:38.5px;height:24.5px;background:#078107;"></div>
<span style="left:237.80px;top:472.65px;font-size:14px;line-height:14px;color:#f4f8ff;transform:scaleX(0.9454);transform-origin:0 0;">FrameTime (ms)</span>
<span style="left:375.82px;top:472.54px;font-size:12px;line-height:12px;color:#ffffff;">95.6</span>
<div style="left:439.7px;top:273.3px;width:58.80000000000001px;height:27px;background:#8a8a8a;border-radius:3px 11px 0 0;"></div>
<span style="left:452.70px;top:280.81px;font-size:17px;line-height:17px;color:#e6e6e6;transform:scaleX(0.9023);transform-origin:0 0;">Sync</span>
<div style="left:499px;top:273.3px;width:43.5px;height:27px;background:#1b5887;border-radius:3px 11px 0 0;"></div>
<span style="left:513.00px;top:280.81px;font-size:17px;line-height:17px;color:#ffffff;transform:scaleX(0.8572);transform-origin:0 0;">TII</span>
<div style="left:543px;top:273.3px;width:70.79999999999995px;height:27px;background:#8a8a8a;border-radius:3px 11px 0 0;"></div>
<span style="left:557.00px;top:280.81px;font-size:17px;line-height:17px;color:#e6e6e6;transform:scaleX(1.0074);transform-origin:0 0;">Audio</span>
<div style="left:614.3px;top:273.3px;width:77.0px;height:27px;background:#8a8a8a;border-radius:3px 11px 0 0;"></div>
<span style="left:627.80px;top:280.81px;font-size:17px;line-height:17px;color:#e6e6e6;transform:scaleX(0.9173);transform-origin:0 0;">Service</span>
<div style="left:691.8px;top:273.3px;width:58.200000000000045px;height:27px;background:#8a8a8a;border-radius:3px 11px 0 0;"></div>
<span style="left:706.00px;top:280.81px;font-size:17px;line-height:17px;color:#e6e6e6;transform:scaleX(0.9097);transform-origin:0 0;">AAC</span>
<div style="left:750.5px;top:273.3px;width:85.79999999999995px;height:27px;background:#8a8a8a;border-radius:3px 11px 0 0;"></div>
<span style="left:764.00px;top:280.81px;font-size:17px;line-height:17px;color:#e6e6e6;transform:scaleX(1.0173);transform-origin:0 0;">Options</span>
<div style="left:836.8px;top:273.3px;width:97.70000000000005px;height:27px;background:#8a8a8a;border-radius:3px 11px 0 0;"></div>
<span style="left:850.00px;top:280.81px;font-size:17px;line-height:17px;color:#e6e6e6;transform:scaleX(0.9458);transform-origin:0 0;">Ensemble</span>
<div style="left:466px;top:310.5px;width:9.5px;height:9.5px;border-radius:50%;background:#ff0000;"></div>
<div style="left:495.8px;top:310px;width:9px;height:9px;background:#0d2540;"></div>
<svg style="left:539px;top:306px" width="15" height="18" viewBox="0 0 15 18"><path d="M0.5 0.5 H10 L14.5 5 V17.5 H0.5Z" fill="#f0f0f0"/><path d="M10 0.5 V5 H14.5" fill="#c8c8c8"/><g stroke="#b0b0b0" stroke-width="1"><line x1="3" y1="8" x2="12" y2="8"/><line x1="3" y1="11" x2="12" y2="11"/><line x1="3" y1="14" x2="12" y2="14"/></g></svg>
<div style="left:446px;top:329.4px;width:395px;height:1.3px;background:#5f8fb8;"></div>
<div style="left:446px;top:370.29999999999995px;width:395px;height:1.3px;background:#5f8fb8;"></div>
<div style="left:446px;top:411.4px;width:395px;height:1.3px;background:#5f8fb8;"></div>
<div style="left:849.5px;top:300px;width:1px;height:109px;background:#3a74a6;"></div>
<div style="left:446.4px;top:344.3px;width:13.0px;height:13.0px;border-radius:50%;background:#e8e8e8;"></div>
<span style="left:471.60px;top:343.30px;font-size:15px;line-height:15px;color:#f4f8ff;transform:scaleX(0.9235);transform-origin:0 0;">Show all entries for this EId on the map</span>
<div style="left:446.4px;top:385.5px;width:13.0px;height:13.0px;border-radius:50%;background:#e8e8e8;"></div>
<span style="left:471.60px;top:384.10px;font-size:15px;line-height:15px;color:#f4f8ff;transform:scaleX(0.9138);transform-origin:0 0;">Show Collisions for Sub Id</span>
<div style="left:642px;top:380px;width:45px;height:22px;background:transparent;border:1px solid #8aa8c8;box-sizing:border-box;"></div>
<span style="left:644.60px;top:385.00px;font-size:13px;line-height:13px;color:#f4f8ff;transform:scaleX(0.9682);transform-origin:0 0;">1</span>
<svg style="left:665px;top:387.5px" width="11" height="7"><path d="M0 0 L11 0 L5.5 6.5Z" fill="#f4f8ff"/></svg>
<svg style="left:445.8px;top:430.8px" width="14" height="14" viewBox="-7 -7 14 14"><circle r="6.5" fill="#e8e8e8"/><path d="M-2.6 2.6 L2.6 -2.6" stroke="#2a2a2a" stroke-width="1.7" fill="none"/></svg>
<span style="left:483.80px;top:432.30px;font-size:13.7px;line-height:13.7px;color:#f4f8ff;transform:scaleX(1.0911);transform-origin:0 0;">Main</span>
<span style="left:536.80px;top:432.30px;font-size:13.7px;line-height:13.7px;color:#f4f8ff;transform:scaleX(1.1077);transform-origin:0 0;">Sub</span>
<span style="left:582.20px;top:432.30px;font-size:13.7px;line-height:13.7px;color:#f4f8ff;transform:scaleX(1.0813);transform-origin:0 0;">Strength</span>
<span style="left:658.40px;top:432.30px;font-size:13.7px;line-height:13.7px;color:#f4f8ff;transform:scaleX(1.0842);transform-origin:0 0;">km abs.</span>
<span style="left:729.30px;top:432.30px;font-size:13.7px;line-height:13.7px;color:#f4f8ff;transform:scaleX(1.1679);transform-origin:0 0;">km rel.</span>
<span style="left:793.40px;top:432.30px;font-size:13.7px;line-height:13.7px;color:#f4f8ff;transform:scaleX(1.0868);transform-origin:0 0;">AZM(°)</span>
<div style="left:446.5px;top:447.3px;width:395px;height:1.3px;background:#7aa4c8;"></div>
<svg style="left:445.8px;top:458px" width="14" height="14" viewBox="-7 -7 14 14"><circle r="6.5" fill="#e8e8e8"/><path d="M-3 0.2 L-0.8 2.6 L3 -2.8" stroke="#2a2a2a" stroke-width="1.7" fill="none"/></svg>
<svg style="left:445.8px;top:483.2px" width="14" height="14" viewBox="-7 -7 14 14"><circle r="6.5" fill="#e8e8e8"/><path d="M-3 0.2 L-0.8 2.6 L3 -2.8" stroke="#2a2a2a" stroke-width="1.7" fill="none"/></svg>
<span style="left:485.40px;top:461.50px;font-size:13.7px;line-height:13.7px;color:#f4f8ff;transform:scaleX(0.9300);transform-origin:0 0;">35</span>
<span style="left:540.40px;top:461.50px;font-size:13.7px;line-height:13.7px;color:#f4f8ff;transform:scaleX(0.9300);transform-origin:0 0;">1</span>
<span style="left:584.00px;top:461.50px;font-size:13.7px;line-height:13.7px;color:#f4f8ff;transform:scaleX(0.9300);transform-origin:0 0;">0.744</span>
<span style="left:661.00px;top:461.50px;font-size:13.7px;line-height:13.7px;color:#f4f8ff;transform:scaleX(0.9300);transform-origin:0 0;">276.1</span>
<span style="left:731.30px;top:461.50px;font-size:13.7px;line-height:13.7px;color:#f4f8ff;transform:scaleX(0.9300);transform-origin:0 0;">0.0</span>
<span style="left:795.50px;top:461.50px;font-size:13.7px;line-height:13.7px;color:#f4f8ff;transform:scaleX(0.9300);transform-origin:0 0;">214.3</span>
<span style="left:485.40px;top:486.60px;font-size:13.7px;line-height:13.7px;color:#f4f8ff;transform:scaleX(0.9300);transform-origin:0 0;">35</span>
<span style="left:539.30px;top:486.60px;font-size:13.7px;line-height:13.7px;color:#f4f8ff;transform:scaleX(0.9300);transform-origin:0 0;">10</span>
<span style="left:584.00px;top:486.60px;font-size:13.7px;line-height:13.7px;color:#f4f8ff;transform:scaleX(0.9300);transform-origin:0 0;">0.098</span>
<div style="left:882.6px;top:331px;width:2.2px;height:119px;background:#e0e0e0;border-radius:1px;"></div>
<div style="left:877.2px;top:431.6px;width:13px;height:13px;border-radius:50%;background:radial-gradient(circle at 45% 35%,#e6e6e6,#a0a0a0 65%,#6a6a6a);"></div>
<div style="left:931.9px;top:331px;width:2.2px;height:119px;background:#e0e0e0;border-radius:1px;"></div>
<div style="left:926.5px;top:426.3px;width:13px;height:13px;border-radius:50%;background:radial-gradient(circle at 45% 35%,#e6e6e6,#a0a0a0 65%,#6a6a6a);"></div>
<span style="left:866.4px;top:375.8px;font-size:14px;line-height:14px;color:#f4f8ff;transform:translate(-50%,-50%) rotate(-90deg) scaleX(0.93);white-space:nowrap;">Threshold</span>
<span style="left:915.8px;top:381px;font-size:14px;line-height:14px;color:#f4f8ff;transform:translate(-50%,-50%) rotate(-90deg) scaleX(0.93);white-space:nowrap;">Average</span>
<span style="left:868.80px;top:458.02px;font-size:12.5px;line-height:12.5px;color:#f4f8ff;transform:scaleX(0.9271);transform-origin:0 0;">0.048</span>
<span style="left:925.60px;top:458.02px;font-size:12.5px;line-height:12.5px;color:#f4f8ff;transform:scaleX(0.8932);transform-origin:0 0;">10s</span>
<div style="left:865px;top:481.5px;width:12px;height:12px;border-radius:50%;background:#e8e8e8;"></div>
<span style="left:883.00px;top:483.42px;font-size:12.5px;line-height:12.5px;color:#f4f8ff;transform:scaleX(0.8932);transform-origin:0 0;">x10</span>
<span style="left:1324.60px;top:268.45px;font-size:14px;line-height:14px;color:#f0f4ff;transform:scaleX(1.0104);transform-origin:0 0;">Channel Impulse Response (CIR)</span>
<div style="left:958.3px;top:297.3px;width:13.0px;height:13.0px;border-radius:50%;background:#e8e8e8;"></div>
<span style="left:975.70px;top:299.34px;font-size:12px;line-height:12px;color:#f0f0f0;transform:scaleX(0.8997);transform-origin:0 0;">Freeze</span>
<div style="left:1029.5px;top:297.3px;width:13.0px;height:13.0px;border-radius:50%;background:#e8e8e8;"></div>
<span style="left:1047.20px;top:299.34px;font-size:12px;line-height:12px;color:#f0f0f0;transform:scaleX(0.9734);transform-origin:0 0;">Gradient</span>
<span style="left:963.70px;top:346.27px;font-size:11.5px;line-height:11.5px;color:#f0f0f0;transform:scaleX(1.0273);transform-origin:0 0;">Smoothing Level</span>
<div style="left:963.50px;top:364px;width:1px;height:3px;background:#8a8a8a;"></div><div style="left:968.03px;top:364px;width:1px;height:3px;background:#8a8a8a;"></div><div style="left:972.56px;top:364px;width:1px;height:3px;background:#8a8a8a;"></div><div style="left:977.09px;top:364px;width:1px;height:3px;background:#8a8a8a;"></div><div style="left:981.62px;top:364px;width:1px;height:3px;background:#8a8a8a;"></div><div style="left:986.15px;top:364px;width:1px;height:3px;background:#8a8a8a;"></div><div style="left:990.68px;top:364px;width:1px;height:3px;background:#8a8a8a;"></div><div style="left:995.21px;top:364px;width:1px;height:3px;background:#8a8a8a;"></div><div style="left:999.74px;top:364px;width:1px;height:3px;background:#8a8a8a;"></div><div style="left:1004.27px;top:364px;width:1px;height:3px;background:#8a8a8a;"></div><div style="left:1008.80px;top:364px;width:1px;height:3px;background:#8a8a8a;"></div><div style="left:1013.33px;top:364px;width:1px;height:3px;background:#8a8a8a;"></div><div style="left:1017.86px;top:364px;width:1px;height:3px;background:#8a8a8a;"></div><div style="left:1022.39px;top:364px;width:1px;height:3px;background:#8a8a8a;"></div><div style="left:1026.92px;top:364px;width:1px;height:3px;background:#8a8a8a;"></div><div style="left:1031.45px;top:364px;width:1px;height:3px;background:#8a8a8a;"></div><div style="left:1035.98px;top:364px;width:1px;height:3px;background:#8a8a8a;"></div><div style="left:1040.51px;top:364px;width:1px;height:3px;background:#8a8a8a;"></div><div style="left:1045.04px;top:364px;width:1px;height:3px;background:#8a8a8a;"></div><div style="left:1049.57px;top:364px;width:1px;height:3px;background:#8a8a8a;"></div><div style="left:1054.10px;top:364px;width:1px;height:3px;background:#8a8a8a;"></div><div style="left:1058.63px;top:364px;width:1px;height:3px;background:#8a8a8a;"></div><div style="left:1063.16px;top:364px;width:1px;height:3px;background:#8a8a8a;"></div><div style="left:1067.69px;top:364px;width:1px;height:3px;background:#8a8a8a;"></div><div style="left:1072.22px;top:364px;width:1px;height:3px;background:#8a8a8a;"></div><div style="left:1076.75px;top:364px;width:1px;height:3px;background:#8a8a8a;"></div><div style="left:1081.28px;top:364px;width:1px;height:3px;background:#8a8a8a;"></div><div style="left:1085.81px;top:364px;width:1px;height:3px;background:#8a8a8a;"></div><div style="left:1090.34px;top:364px;width:1px;height:3px;background:#8a8a8a;"></div><div style="left:1094.87px;top:364px;width:1px;height:3px;background:#8a8a8a;"></div><div style="left:1099.40px;top:364px;width:1px;height:3px;background:#8a8a8a;"></div>
<div style="left:958.6px;top:374.5px;width:145px;height:2.2px;background:#e8e8e8;border-radius:1px;"></div>
<div style="left:975.8px;top:369px;width:13px;height:13px;border-radius:50%;background:radial-gradient(circle at 45% 35%,#e6e6e6,#a0a0a0 65%,#6a6a6a);"></div>
<span style="left:963.70px;top:399.77px;font-size:11.5px;line-height:11.5px;color:#f0f0f0;transform:scaleX(0.9438);transform-origin:0 0;">Zoom X</span>
<div style="left:958.6px;top:423.5px;width:145px;height:2.2px;background:#e8e8e8;border-radius:1px;"></div>
<div style="left:958.3px;top:418px;width:13px;height:13px;border-radius:50%;background:radial-gradient(circle at 45% 35%,#e6e6e6,#a0a0a0 65%,#6a6a6a);"></div>
<span style="left:963.70px;top:451.77px;font-size:11.5px;line-height:11.5px;color:#f0f0f0;transform:scaleX(1.0542);transform-origin:0 0;">x-Axis</span>
<div style="left:970.0px;top:469.8px;width:11.0px;height:11.0px;border-radius:50%;background:#e8e8e8;"></div>
<span style="left:987.90px;top:468.90px;font-size:13px;line-height:13px;color:#f0f0f0;transform:scaleX(0.8621);transform-origin:0 0;">Samples</span>
<div style="left:970.0px;top:489.6px;width:11px;height:11px;border-radius:50%;background:#000;border:2.5px solid #e8e8e8;box-sizing:border-box;"></div>
<span style="left:987.90px;top:488.70px;font-size:13px;line-height:13px;color:#f0f0f0;transform:scaleX(0.8897);transform-origin:0 0;">Distance</span>
<div style="left:970.0px;top:509.4px;width:11.0px;height:11.0px;border-radius:50%;background:#e8e8e8;"></div>
<span style="left:987.90px;top:508.50px;font-size:13px;line-height:13px;color:#f0f0f0;transform:scaleX(0.8801);transform-origin:0 0;">Time</span>
<svg style="left:0;top:0" width="1775" height="596"><rect x="1300" y="296.6" width="62.4" height="249.39999999999998" fill="#404040"/><g stroke="#c8c8c8" stroke-width="1" opacity="0.85"><line x1="1184.2" y1="296.6" x2="1775" y2="296.6"/><line x1="1184.2" y1="317.5" x2="1775" y2="317.5"/><line x1="1184.2" y1="338.3" x2="1775" y2="338.3"/><line x1="1184.2" y1="359.2" x2="1775" y2="359.2"/><line x1="1184.2" y1="380.0" x2="1775" y2="380.0"/><line x1="1184.2" y1="400.9" x2="1775" y2="400.9"/><line x1="1184.2" y1="421.7" x2="1775" y2="421.7"/><line x1="1184.2" y1="442.6" x2="1775" y2="442.6"/><line x1="1184.2" y1="463.4" x2="1775" y2="463.4"/><line x1="1184.2" y1="484.2" x2="1775" y2="484.2"/><line x1="1184.2" y1="505.1" x2="1775" y2="505.1"/><line x1="1184.2" y1="526.0" x2="1775" y2="526.0"/><line x1="1216.9" y1="296.6" x2="1216.9" y2="550"/><line x1="1265.3" y1="296.6" x2="1265.3" y2="550"/><line x1="1313.6" y1="296.6" x2="1313.6" y2="550"/><line x1="1362.0" y1="296.6" x2="1362.0" y2="550"/><line x1="1410.4" y1="296.6" x2="1410.4" y2="550"/><line x1="1458.7" y1="296.6" x2="1458.7" y2="550"/><line x1="1507.1" y1="296.6" x2="1507.1" y2="550"/><line x1="1555.4" y1="296.6" x2="1555.4" y2="550"/><line x1="1603.8" y1="296.6" x2="1603.8" y2="550"/><line x1="1652.2" y1="296.6" x2="1652.2" y2="550"/><line x1="1700.5" y1="296.6" x2="1700.5" y2="550"/><line x1="1748.9" y1="296.6" x2="1748.9" y2="550"/><line x1="1184.2" y1="296.6" x2="1184.2" y2="546"/><line x1="1184.2" y1="546" x2="1775" y2="546"/></g><polyline points="1184.2,431.7 1185.3,437.2 1186.4,431.5 1187.5,435.5 1188.6,431.7 1189.7,430.8 1190.8,441.5 1191.9,447.7 1193.0,435.2 1194.1,428.3 1195.2,440.8 1196.3,439.8 1197.4,437.9 1198.5,434.4 1199.6,433.8 1200.7,449.2 1201.8,437.5 1202.9,433.4 1204.0,441.9 1205.1,440.1 1206.2,429.8 1207.3,435.2 1208.4,439.8 1209.5,438.2 1210.6,434.4 1211.7,435.2 1212.8,436.0 1213.9,437.1 1215.0,446.7 1216.1,442.5 1217.2,433.5 1218.3,434.5 1219.4,439.9 1220.5,441.0 1221.6,437.9 1222.7,439.7 1223.8,434.3 1224.9,443.7 1226.0,440.9 1227.1,432.8 1228.2,436.6 1229.3,439.4 1230.4,436.5 1231.5,437.9 1232.6,436.9 1233.7,441.7 1234.8,441.5 1235.9,436.1 1237.0,437.4 1238.1,438.6 1239.2,436.8 1240.3,439.0 1241.4,440.0 1242.5,445.9 1243.6,440.5 1244.7,438.0 1245.8,436.4 1246.9,443.6 1248.0,440.3 1249.1,442.5 1250.2,430.4 1251.3,432.9 1252.4,443.0 1253.5,436.2 1254.6,439.4 1255.7,437.8 1256.8,438.4 1257.9,437.9 1259.0,436.2 1260.1,431.8 1261.2,439.7 1262.3,435.0 1263.4,441.3 1264.5,438.3 1265.6,436.0 1266.7,438.3 1267.8,435.8 1268.9,425.8 1270.0,414.3 1271.1,398.5 1272.2,409.4 1273.3,421.8 1274.4,432.3 1275.5,435.1 1276.6,428.5 1277.7,426.0 1278.8,430.2 1279.9,439.6 1281.0,437.8 1282.1,430.3 1283.2,436.3 1284.3,442.3 1285.4,443.8 1286.5,436.2 1287.6,430.1 1288.7,434.8 1289.8,433.4 1290.9,436.1 1292.0,431.8 1293.1,430.6 1294.2,436.2 1295.3,439.1 1296.4,439.2 1297.5,432.9 1298.6,435.6 1299.7,438.7 1300.8,437.7 1301.9,440.5 1303.0,434.2 1304.1,442.9 1305.2,438.3 1306.3,442.5 1307.4,430.2 1308.5,441.9 1309.6,437.7 1310.7,433.7 1311.8,438.0 1312.9,436.5 1314.0,434.2 1315.1,433.3 1316.2,437.3 1317.3,434.0 1318.4,435.1 1319.5,436.1 1320.6,427.5 1321.7,432.9 1322.8,440.0 1323.9,443.3 1325.0,430.7 1326.1,439.9 1327.2,444.6 1328.3,445.3 1329.4,439.5 1330.5,442.8 1331.6,436.9 1332.7,434.0 1333.8,440.8 1334.9,436.5 1336.0,442.0 1337.1,431.5 1338.2,428.7 1339.3,433.6 1340.4,438.6 1341.5,432.9 1342.6,431.6 1343.7,432.0 1344.8,430.9 1345.9,430.9 1347.0,422.9 1348.1,415.7 1349.2,424.7 1350.3,424.3 1351.4,421.2 1352.5,415.3 1353.6,415.9 1354.7,417.0 1355.8,419.6 1356.9,408.5 1358.0,391.6 1359.1,373.1 1360.2,352.4 1361.3,327.0 1362.0,300.0 1363.1,326.4 1364.2,352.8 1365.3,379.2 1366.4,397.9 1367.5,398.8 1368.6,394.8 1369.7,404.9 1370.8,404.0 1371.9,408.5 1373.0,409.0 1374.1,419.1 1375.2,409.5 1376.3,416.9 1377.4,418.5 1378.5,420.0 1379.6,414.4 1380.7,418.3 1381.8,418.8 1382.9,422.1 1384.0,421.4 1385.1,422.1 1386.2,428.9 1387.3,427.4 1388.4,433.5 1389.5,426.1 1390.6,410.4 1391.7,392.8 1392.8,371.5 1393.6,346.0 1394.7,377.9 1395.8,396.5 1396.9,391.9 1398.0,407.1 1399.1,410.0 1400.2,408.0 1401.3,405.8 1402.4,427.1 1403.5,420.3 1404.6,422.7 1405.7,429.0 1406.8,426.3 1407.9,431.8 1409.0,436.0 1410.1,435.0 1411.2,435.3 1412.3,439.4 1413.4,439.1 1414.5,437.8 1415.6,433.9 1416.7,424.5 1417.8,413.7 1418.9,399.9 1419.3,390.8 1420.4,409.2 1421.5,420.8 1422.6,425.1 1423.7,434.5 1424.8,441.6 1425.9,433.9 1427.0,429.4 1428.1,440.0 1429.2,437.7 1430.3,430.2 1431.4,438.7 1432.5,445.1 1433.6,438.8 1434.7,436.1 1435.8,435.6 1436.9,438.9 1438.0,440.9 1439.1,439.3 1440.2,439.7 1441.3,439.6 1442.4,439.2 1443.5,438.7 1444.6,441.5 1445.7,431.7 1446.8,431.5 1447.9,434.3 1449.0,441.6 1450.1,437.1 1451.2,426.6 1452.3,431.3 1453.4,438.7 1454.5,433.1 1455.6,432.9 1456.7,436.1 1457.8,432.1 1458.9,435.0 1460.0,427.6 1461.1,429.7 1462.2,426.6 1463.3,411.6 1464.4,393.9 1465.4,368.0 1466.5,395.7 1467.6,413.1 1468.7,426.8 1469.8,437.1 1470.9,440.6 1472.0,440.7 1473.1,441.6 1474.2,426.8 1475.3,408.8 1476.4,388.3 1477.5,362.5 1478.0,342.0 1479.1,377.6 1480.2,399.9 1481.3,418.9 1482.4,433.1 1483.5,435.2 1484.6,442.1 1485.7,433.0 1486.8,431.2 1487.9,444.1 1489.0,433.1 1490.1,430.7 1491.2,436.5 1492.3,441.4 1493.4,440.2 1494.5,427.6 1495.6,414.3 1496.7,398.6 1497.7,375.6 1498.8,400.2 1499.9,415.6 1501.0,428.8 1502.1,437.3 1503.2,430.1 1504.3,426.1 1505.4,434.7 1506.5,427.6 1507.6,432.2 1508.7,424.0 1509.8,414.5 1510.9,400.9 1512.0,412.5 1513.1,422.4 1514.2,430.7 1515.3,438.5 1516.4,436.4 1517.5,438.6 1518.6,435.5 1519.7,437.8 1520.8,444.6 1521.9,433.3 1523.0,437.1 1524.1,433.5 1525.2,443.5 1526.3,434.3 1527.4,433.2 1528.5,424.1 1529.6,413.6 1530.7,399.7 1531.0,392.6 1532.1,410.3 1533.2,421.4 1534.3,430.8 1535.4,441.5 1536.5,436.1 1537.6,430.0 1538.7,433.6 1539.8,435.4 1540.9,428.2 1542.0,439.2 1543.1,441.9 1544.2,438.5 1545.3,443.2 1546.4,434.8 1547.5,438.4 1548.6,432.0 1549.7,436.0 1550.8,439.8 1551.9,435.0 1553.0,440.5 1554.1,431.6 1555.2,441.0 1556.3,435.7 1557.4,437.7 1558.5,432.9 1559.6,435.3 1560.7,424.6 1561.8,435.9 1562.9,440.3 1564.0,440.1 1565.1,438.2 1566.2,437.2 1567.3,434.2 1568.4,424.8 1569.5,430.5 1570.6,431.2 1571.7,433.0 1572.8,428.4 1573.9,438.2 1575.0,441.7 1576.1,435.2 1577.2,432.4 1578.3,425.9 1579.4,418.2 1580.5,406.0 1581.6,418.2 1582.7,425.9 1583.8,432.4 1584.9,436.5 1586.0,444.6 1587.1,440.8 1588.2,440.6 1589.3,434.8 1590.4,439.0 1591.5,434.1 1592.6,442.0 1593.7,433.5 1594.8,429.3 1595.9,432.3 1597.0,439.9 1598.1,431.2 1599.2,435.3 1600.3,434.6 1601.4,441.1 1602.5,435.8 1603.6,437.4 1604.7,432.8 1605.8,437.1 1606.9,434.3 1608.0,440.1 1609.1,443.1 1610.2,440.4 1611.3,438.6 1612.4,433.1 1613.5,440.5 1614.6,427.4 1615.7,437.5 1616.8,440.4 1617.9,437.4 1619.0,426.3 1620.1,433.3 1621.2,429.8 1622.3,429.0 1623.4,432.6 1624.5,427.9 1625.6,421.9 1626.0,418.0 1627.1,426.0 1628.2,431.0 1629.3,435.2 1630.4,440.3 1631.5,443.6 1632.6,439.8 1633.7,437.3 1634.8,438.8 1635.9,444.6 1637.0,441.5 1638.1,433.3 1639.2,430.8 1640.3,439.2 1641.4,440.3 1642.5,437.8 1643.6,433.9 1644.7,435.9 1645.8,438.9 1646.9,434.4 1648.0,435.3 1649.1,441.1 1650.2,440.8 1651.3,436.3 1652.4,439.1 1653.5,434.6 1654.6,435.1 1655.7,433.9 1656.8,421.4 1657.9,437.1 1659.0,439.9 1660.1,443.5 1661.2,441.8 1662.3,431.4 1663.4,430.0 1664.5,425.0 1665.0,421.0 1666.1,428.0 1667.2,428.3 1668.3,435.6 1669.4,436.2 1670.5,436.6 1671.6,432.9 1672.7,437.5 1673.8,432.8 1674.9,448.7 1676.0,432.3 1677.1,440.7 1678.2,430.3 1679.3,435.8 1680.4,438.0 1681.5,433.8 1682.6,438.0 1683.7,437.9 1684.8,436.2 1685.9,437.4 1687.0,432.9 1688.1,431.4 1689.2,442.5 1690.3,434.8 1691.4,438.0 1692.5,441.6 1693.6,434.0 1694.7,442.9 1695.8,435.6 1696.9,431.0 1698.0,425.5 1699.0,417.4 1700.1,426.0 1701.2,431.4 1702.3,429.0 1703.4,437.0 1704.5,434.2 1705.6,434.4 1706.7,436.5 1707.8,431.5 1708.9,428.2 1710.0,434.3 1711.1,428.5 1712.2,433.2 1713.3,433.0 1714.4,426.9 1715.5,419.1 1716.0,413.0 1717.1,423.7 1718.2,430.3 1719.3,435.6 1720.4,431.9 1721.5,437.3 1722.6,437.0 1723.7,439.8 1724.8,436.0 1725.9,438.3 1727.0,438.6 1728.1,435.0 1729.2,439.4 1730.3,438.1 1731.4,442.2 1732.5,437.9 1733.6,434.0 1734.7,435.5 1735.8,433.7 1736.9,430.4 1738.0,425.0 1739.1,430.4 1740.2,433.7 1741.3,435.8 1742.4,437.6 1743.5,435.2 1744.6,435.5 1745.7,431.9 1746.8,437.4 1747.9,432.2 1749.0,443.9 1750.1,436.4 1751.2,440.3 1752.3,441.3 1753.4,438.5 1754.5,441.3 1755.6,432.8 1756.7,438.2 1757.8,437.7 1758.9,432.1 1760.0,440.0 1761.1,437.9 1762.2,440.8 1763.3,435.2 1764.4,434.1 1765.5,433.3 1766.6,431.5 1767.7,435.3 1768.8,427.0 1769.9,433.9 1771.0,438.8 1772.1,441.3 1773.2,438.2 1774.3,430.1" fill="none" stroke="#d8d020" stroke-width="1.5"/><path d="M1361 299.5 L1367.5 304 L1361 308.5Z" fill="#f0f070"/><line x1="1425" y1="324.8" x2="1559.7" y2="324.8" stroke="#e01010" stroke-width="1"/><circle cx="1492" cy="324.8" r="2.2" fill="#ff2020"/><line x1="1491.7" y1="325" x2="1491.7" y2="546" stroke="#b0b0b0" stroke-width="0.7"/><path d="M1488 541 L1496 541 L1492 548Z" fill="#ff2020"/></svg>
<span style="left:1132.90px;top:285.65px;font-size:22.5px;line-height:22.5px;color:#f0f0f0;transform:scaleX(0.9362);transform-origin:0 0;">70.0</span>
<span style="left:1132.90px;top:327.35px;font-size:22.5px;line-height:22.5px;color:#f0f0f0;transform:scaleX(0.9362);transform-origin:0 0;">60.0</span>
<span style="left:1132.90px;top:369.05px;font-size:22.5px;line-height:22.5px;color:#f0f0f0;transform:scaleX(0.9362);transform-origin:0 0;">50.0</span>
<span style="left:1132.90px;top:410.75px;font-size:22.5px;line-height:22.5px;color:#f0f0f0;transform:scaleX(0.9362);transform-origin:0 0;">40.0</span>
<span style="left:1132.90px;top:452.45px;font-size:22.5px;line-height:22.5px;color:#f0f0f0;transform:scaleX(0.9362);transform-origin:0 0;">30.0</span>
<span style="left:1132.90px;top:494.15px;font-size:22.5px;line-height:22.5px;color:#f0f0f0;transform:scaleX(0.9362);transform-origin:0 0;">20.0</span>
<span style="left:1201.46px;top:552.95px;font-size:22.5px;line-height:22.5px;color:#f0f0f0;transform:scaleX(0.9200);transform-origin:0 0;">-60</span>
<span style="left:1249.82px;top:552.95px;font-size:22.5px;line-height:22.5px;color:#f0f0f0;transform:scaleX(0.9200);transform-origin:0 0;">-40</span>
<span style="left:1298.18px;top:552.95px;font-size:22.5px;line-height:22.5px;color:#f0f0f0;transform:scaleX(0.9200);transform-origin:0 0;">-20</span>
<span style="left:1355.74px;top:552.95px;font-size:22.5px;line-height:22.5px;color:#f0f0f0;transform:scaleX(0.9200);transform-origin:0 0;">0</span>
<span style="left:1398.35px;top:552.95px;font-size:22.5px;line-height:22.5px;color:#f0f0f0;transform:scaleX(0.9200);transform-origin:0 0;">20</span>
<span style="left:1446.71px;top:552.95px;font-size:22.5px;line-height:22.5px;color:#f0f0f0;transform:scaleX(0.9200);transform-origin:0 0;">40</span>
<span style="left:1495.07px;top:552.95px;font-size:22.5px;line-height:22.5px;color:#f0f0f0;transform:scaleX(0.9200);transform-origin:0 0;">60</span>
<span style="left:1543.43px;top:552.95px;font-size:22.5px;line-height:22.5px;color:#f0f0f0;transform:scaleX(0.9200);transform-origin:0 0;">80</span>
<span style="left:1586.03px;top:552.95px;font-size:22.5px;line-height:22.5px;color:#f0f0f0;transform:scaleX(0.9200);transform-origin:0 0;">100</span>
<span style="left:1634.39px;top:552.95px;font-size:22.5px;line-height:22.5px;color:#f0f0f0;transform:scaleX(0.9200);transform-origin:0 0;">120</span>
<span style="left:1682.75px;top:552.95px;font-size:22.5px;line-height:22.5px;color:#f0f0f0;transform:scaleX(0.9200);transform-origin:0 0;">140</span>
<span style="left:1731.11px;top:552.95px;font-size:22.5px;line-height:22.5px;color:#f0f0f0;transform:scaleX(0.9200);transform-origin:0 0;">160</span>
<span style="left:1342.80px;top:291.80px;font-size:21.5px;line-height:21.5px;color:#ececec;transform:scaleX(0.9798);transform-origin:0 0;">35 1</span>
<span style="left:1465.30px;top:312.50px;font-size:21.5px;line-height:21.5px;color:#ececec;transform:scaleX(0.9925);transform-origin:0 0;">35 10</span>
<span style="left:1477.20px;top:568.95px;font-size:14px;line-height:14px;color:#c8c8c8;transform:scaleX(1.0864);transform-origin:0 0;">54.0</span>
<span style="left:1425.00px;top:574.82px;font-size:21px;line-height:21px;color:#f0f0f0;transform:scaleX(1.0057);transform-origin:0 0;">Distance Difference (km)</span>
<span style="left:1134.5px;top:419.8px;font-size:21px;line-height:21px;color:#f0f0f0;transform:translate(-50%,-50%) rotate(-90deg);white-space:nowrap;">Magnitude (dB)</span>
</body></html>
